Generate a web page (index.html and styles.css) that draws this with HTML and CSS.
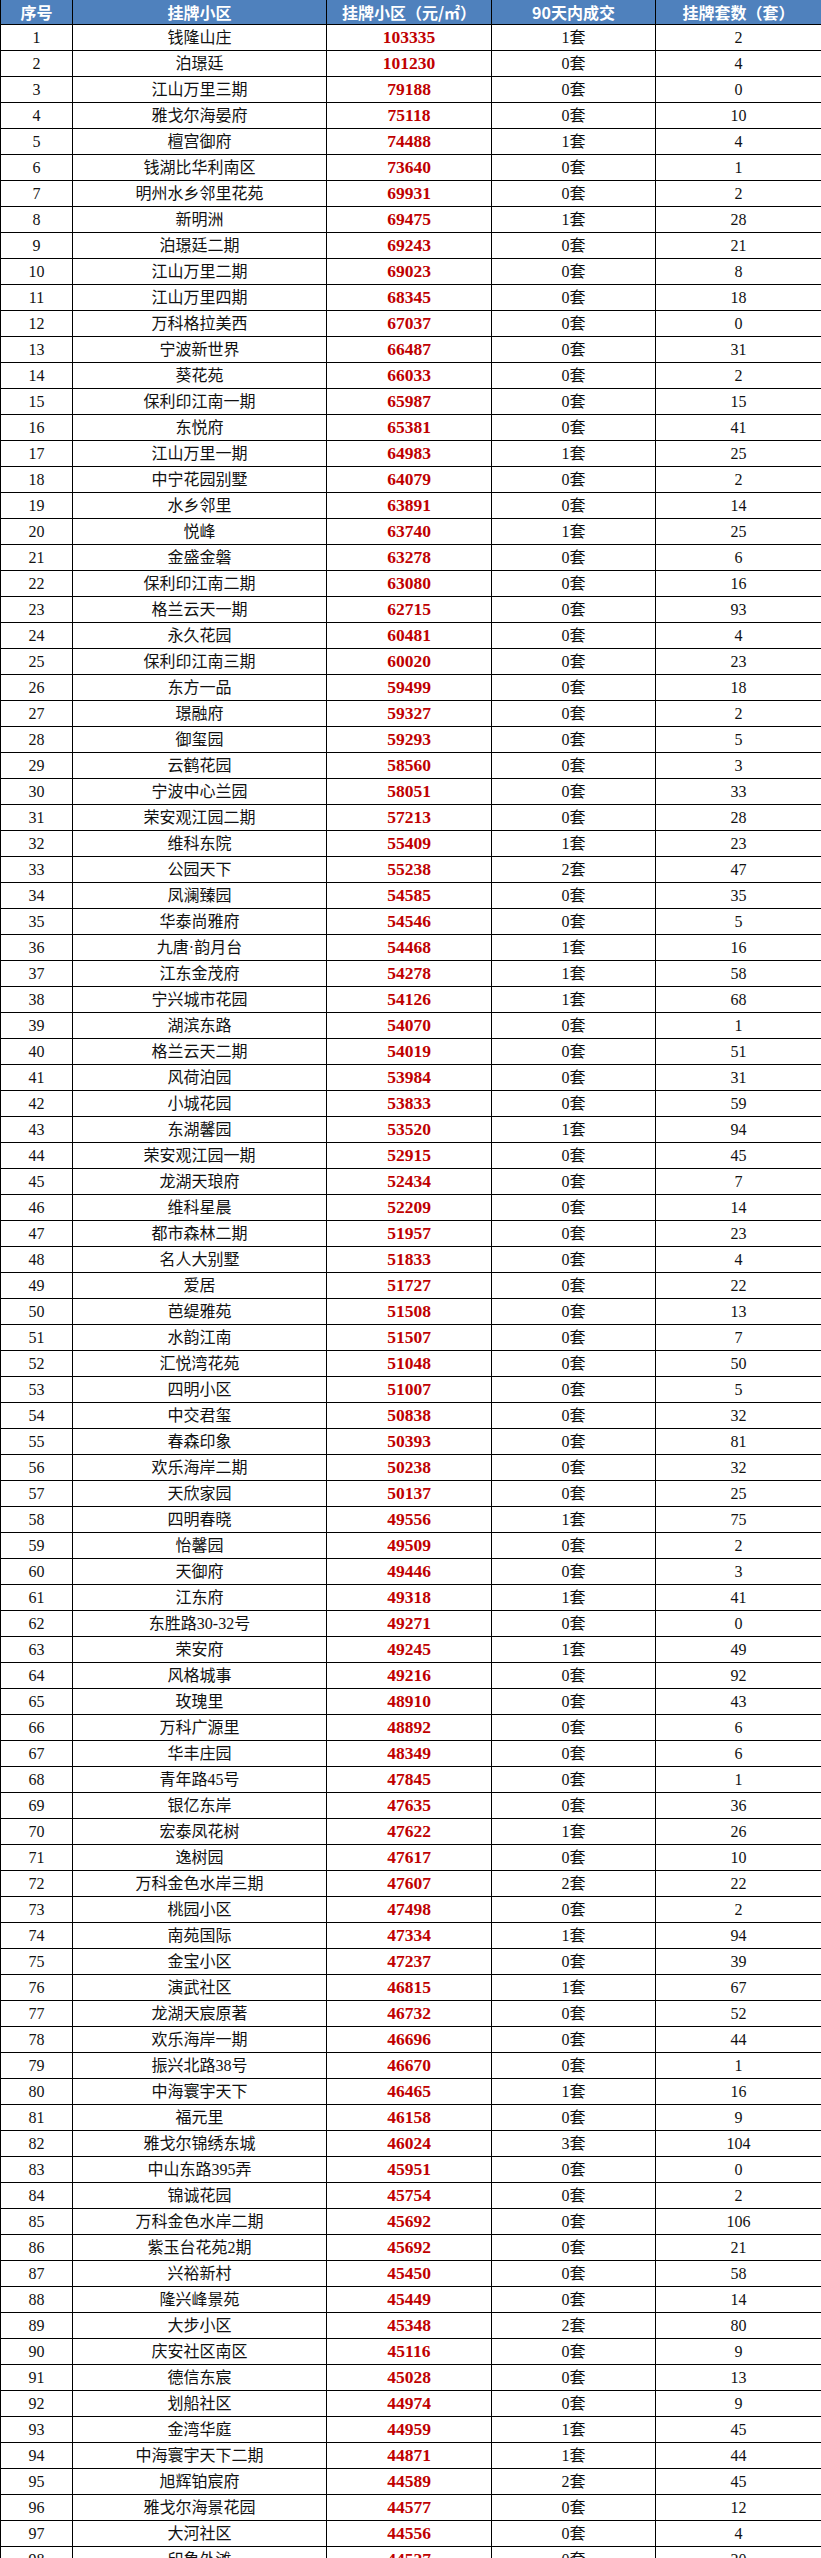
FILE: index.html
```html
<!DOCTYPE html>
<html lang="zh-CN">
<head>
<meta charset="utf-8">
<title>挂牌小区</title>
<link rel="stylesheet" href="styles.css">
</head>
<body>
<table class="tbl">
<colgroup><col class="c1"><col class="c2"><col class="c3"><col class="c4"><col class="c5"></colgroup>
<thead>
<tr><th>序号</th><th>挂牌小区</th><th>挂牌小区（元/㎡）</th><th>90天内成交</th><th>挂牌套数（套）</th></tr>
</thead>
<tbody>
<tr><td>1</td><td>钱隆山庄</td><td class="p">103335</td><td>1套</td><td>2</td></tr>
<tr><td>2</td><td>泊璟廷</td><td class="p">101230</td><td>0套</td><td>4</td></tr>
<tr><td>3</td><td>江山万里三期</td><td class="p">79188</td><td>0套</td><td>0</td></tr>
<tr><td>4</td><td>雅戈尔海晏府</td><td class="p">75118</td><td>0套</td><td>10</td></tr>
<tr><td>5</td><td>檀宫御府</td><td class="p">74488</td><td>1套</td><td>4</td></tr>
<tr><td>6</td><td>钱湖比华利南区</td><td class="p">73640</td><td>0套</td><td>1</td></tr>
<tr><td>7</td><td>明州水乡邻里花苑</td><td class="p">69931</td><td>0套</td><td>2</td></tr>
<tr><td>8</td><td>新明洲</td><td class="p">69475</td><td>1套</td><td>28</td></tr>
<tr><td>9</td><td>泊璟廷二期</td><td class="p">69243</td><td>0套</td><td>21</td></tr>
<tr><td>10</td><td>江山万里二期</td><td class="p">69023</td><td>0套</td><td>8</td></tr>
<tr><td>11</td><td>江山万里四期</td><td class="p">68345</td><td>0套</td><td>18</td></tr>
<tr><td>12</td><td>万科格拉美西</td><td class="p">67037</td><td>0套</td><td>0</td></tr>
<tr><td>13</td><td>宁波新世界</td><td class="p">66487</td><td>0套</td><td>31</td></tr>
<tr><td>14</td><td>葵花苑</td><td class="p">66033</td><td>0套</td><td>2</td></tr>
<tr><td>15</td><td>保利印江南一期</td><td class="p">65987</td><td>0套</td><td>15</td></tr>
<tr><td>16</td><td>东悦府</td><td class="p">65381</td><td>0套</td><td>41</td></tr>
<tr><td>17</td><td>江山万里一期</td><td class="p">64983</td><td>1套</td><td>25</td></tr>
<tr><td>18</td><td>中宁花园别墅</td><td class="p">64079</td><td>0套</td><td>2</td></tr>
<tr><td>19</td><td>水乡邻里</td><td class="p">63891</td><td>0套</td><td>14</td></tr>
<tr><td>20</td><td>悦峰</td><td class="p">63740</td><td>1套</td><td>25</td></tr>
<tr><td>21</td><td>金盛金磐</td><td class="p">63278</td><td>0套</td><td>6</td></tr>
<tr><td>22</td><td>保利印江南二期</td><td class="p">63080</td><td>0套</td><td>16</td></tr>
<tr><td>23</td><td>格兰云天一期</td><td class="p">62715</td><td>0套</td><td>93</td></tr>
<tr><td>24</td><td>永久花园</td><td class="p">60481</td><td>0套</td><td>4</td></tr>
<tr><td>25</td><td>保利印江南三期</td><td class="p">60020</td><td>0套</td><td>23</td></tr>
<tr><td>26</td><td>东方一品</td><td class="p">59499</td><td>0套</td><td>18</td></tr>
<tr><td>27</td><td>璟融府</td><td class="p">59327</td><td>0套</td><td>2</td></tr>
<tr><td>28</td><td>御玺园</td><td class="p">59293</td><td>0套</td><td>5</td></tr>
<tr><td>29</td><td>云鹤花园</td><td class="p">58560</td><td>0套</td><td>3</td></tr>
<tr><td>30</td><td>宁波中心兰园</td><td class="p">58051</td><td>0套</td><td>33</td></tr>
<tr><td>31</td><td>荣安观江园二期</td><td class="p">57213</td><td>0套</td><td>28</td></tr>
<tr><td>32</td><td>维科东院</td><td class="p">55409</td><td>1套</td><td>23</td></tr>
<tr><td>33</td><td>公园天下</td><td class="p">55238</td><td>2套</td><td>47</td></tr>
<tr><td>34</td><td>凤澜臻园</td><td class="p">54585</td><td>0套</td><td>35</td></tr>
<tr><td>35</td><td>华泰尚雅府</td><td class="p">54546</td><td>0套</td><td>5</td></tr>
<tr><td>36</td><td>九唐·韵月台</td><td class="p">54468</td><td>1套</td><td>16</td></tr>
<tr><td>37</td><td>江东金茂府</td><td class="p">54278</td><td>1套</td><td>58</td></tr>
<tr><td>38</td><td>宁兴城市花园</td><td class="p">54126</td><td>1套</td><td>68</td></tr>
<tr><td>39</td><td>湖滨东路</td><td class="p">54070</td><td>0套</td><td>1</td></tr>
<tr><td>40</td><td>格兰云天二期</td><td class="p">54019</td><td>0套</td><td>51</td></tr>
<tr><td>41</td><td>风荷泊园</td><td class="p">53984</td><td>0套</td><td>31</td></tr>
<tr><td>42</td><td>小城花园</td><td class="p">53833</td><td>0套</td><td>59</td></tr>
<tr><td>43</td><td>东湖馨园</td><td class="p">53520</td><td>1套</td><td>94</td></tr>
<tr><td>44</td><td>荣安观江园一期</td><td class="p">52915</td><td>0套</td><td>45</td></tr>
<tr><td>45</td><td>龙湖天琅府</td><td class="p">52434</td><td>0套</td><td>7</td></tr>
<tr><td>46</td><td>维科星晨</td><td class="p">52209</td><td>0套</td><td>14</td></tr>
<tr><td>47</td><td>都市森林二期</td><td class="p">51957</td><td>0套</td><td>23</td></tr>
<tr><td>48</td><td>名人大别墅</td><td class="p">51833</td><td>0套</td><td>4</td></tr>
<tr><td>49</td><td>爱居</td><td class="p">51727</td><td>0套</td><td>22</td></tr>
<tr><td>50</td><td>芭缇雅苑</td><td class="p">51508</td><td>0套</td><td>13</td></tr>
<tr><td>51</td><td>水韵江南</td><td class="p">51507</td><td>0套</td><td>7</td></tr>
<tr><td>52</td><td>汇悦湾花苑</td><td class="p">51048</td><td>0套</td><td>50</td></tr>
<tr><td>53</td><td>四明小区</td><td class="p">51007</td><td>0套</td><td>5</td></tr>
<tr><td>54</td><td>中交君玺</td><td class="p">50838</td><td>0套</td><td>32</td></tr>
<tr><td>55</td><td>春森印象</td><td class="p">50393</td><td>0套</td><td>81</td></tr>
<tr><td>56</td><td>欢乐海岸二期</td><td class="p">50238</td><td>0套</td><td>32</td></tr>
<tr><td>57</td><td>天欣家园</td><td class="p">50137</td><td>0套</td><td>25</td></tr>
<tr><td>58</td><td>四明春晓</td><td class="p">49556</td><td>1套</td><td>75</td></tr>
<tr><td>59</td><td>怡馨园</td><td class="p">49509</td><td>0套</td><td>2</td></tr>
<tr><td>60</td><td>天御府</td><td class="p">49446</td><td>0套</td><td>3</td></tr>
<tr><td>61</td><td>江东府</td><td class="p">49318</td><td>1套</td><td>41</td></tr>
<tr><td>62</td><td>东胜路30-32号</td><td class="p">49271</td><td>0套</td><td>0</td></tr>
<tr><td>63</td><td>荣安府</td><td class="p">49245</td><td>1套</td><td>49</td></tr>
<tr><td>64</td><td>风格城事</td><td class="p">49216</td><td>0套</td><td>92</td></tr>
<tr><td>65</td><td>玫瑰里</td><td class="p">48910</td><td>0套</td><td>43</td></tr>
<tr><td>66</td><td>万科广源里</td><td class="p">48892</td><td>0套</td><td>6</td></tr>
<tr><td>67</td><td>华丰庄园</td><td class="p">48349</td><td>0套</td><td>6</td></tr>
<tr><td>68</td><td>青年路45号</td><td class="p">47845</td><td>0套</td><td>1</td></tr>
<tr><td>69</td><td>银亿东岸</td><td class="p">47635</td><td>0套</td><td>36</td></tr>
<tr><td>70</td><td>宏泰凤花树</td><td class="p">47622</td><td>1套</td><td>26</td></tr>
<tr><td>71</td><td>逸树园</td><td class="p">47617</td><td>0套</td><td>10</td></tr>
<tr><td>72</td><td>万科金色水岸三期</td><td class="p">47607</td><td>2套</td><td>22</td></tr>
<tr><td>73</td><td>桃园小区</td><td class="p">47498</td><td>0套</td><td>2</td></tr>
<tr><td>74</td><td>南苑国际</td><td class="p">47334</td><td>1套</td><td>94</td></tr>
<tr><td>75</td><td>金宝小区</td><td class="p">47237</td><td>0套</td><td>39</td></tr>
<tr><td>76</td><td>演武社区</td><td class="p">46815</td><td>1套</td><td>67</td></tr>
<tr><td>77</td><td>龙湖天宸原著</td><td class="p">46732</td><td>0套</td><td>52</td></tr>
<tr><td>78</td><td>欢乐海岸一期</td><td class="p">46696</td><td>0套</td><td>44</td></tr>
<tr><td>79</td><td>振兴北路38号</td><td class="p">46670</td><td>0套</td><td>1</td></tr>
<tr><td>80</td><td>中海寰宇天下</td><td class="p">46465</td><td>1套</td><td>16</td></tr>
<tr><td>81</td><td>福元里</td><td class="p">46158</td><td>0套</td><td>9</td></tr>
<tr><td>82</td><td>雅戈尔锦绣东城</td><td class="p">46024</td><td>3套</td><td>104</td></tr>
<tr><td>83</td><td>中山东路395弄</td><td class="p">45951</td><td>0套</td><td>0</td></tr>
<tr><td>84</td><td>锦诚花园</td><td class="p">45754</td><td>0套</td><td>2</td></tr>
<tr><td>85</td><td>万科金色水岸二期</td><td class="p">45692</td><td>0套</td><td>106</td></tr>
<tr><td>86</td><td>紫玉台花苑2期</td><td class="p">45692</td><td>0套</td><td>21</td></tr>
<tr><td>87</td><td>兴裕新村</td><td class="p">45450</td><td>0套</td><td>58</td></tr>
<tr><td>88</td><td>隆兴峰景苑</td><td class="p">45449</td><td>0套</td><td>14</td></tr>
<tr><td>89</td><td>大步小区</td><td class="p">45348</td><td>2套</td><td>80</td></tr>
<tr><td>90</td><td>庆安社区南区</td><td class="p">45116</td><td>0套</td><td>9</td></tr>
<tr><td>91</td><td>德信东宸</td><td class="p">45028</td><td>0套</td><td>13</td></tr>
<tr><td>92</td><td>划船社区</td><td class="p">44974</td><td>0套</td><td>9</td></tr>
<tr><td>93</td><td>金湾华庭</td><td class="p">44959</td><td>1套</td><td>45</td></tr>
<tr><td>94</td><td>中海寰宇天下二期</td><td class="p">44871</td><td>1套</td><td>44</td></tr>
<tr><td>95</td><td>旭辉铂宸府</td><td class="p">44589</td><td>2套</td><td>45</td></tr>
<tr><td>96</td><td>雅戈尔海景花园</td><td class="p">44577</td><td>0套</td><td>12</td></tr>
<tr><td>97</td><td>大河社区</td><td class="p">44556</td><td>0套</td><td>4</td></tr>
<tr><td>98</td><td>印象外滩</td><td class="p">44527</td><td>0套</td><td>20</td></tr>
</tbody>
</table>
</body>
</html>
```
FILE: styles.css
```css
html, body {
  margin: 0;
  padding: 0;
  background: #ffffff;
}
.tbl {
  border-collapse: collapse;
  table-layout: fixed;
  width: 821px;
  font-family: "Liberation Serif", "Noto Sans CJK SC", serif;
  font-size: 16px;
  color: #111111;
}
.c1 { width: 72px; }
.c2 { width: 254px; }
.c3 { width: 165px; }
.c4 { width: 164px; }
.c5 { width: 166px; }
.tbl th {
  background: #4f81bd;
  color: #ffffff;
  font-family: "Noto Sans CJK SC", sans-serif;
  font-weight: 700;
  font-size: 16px;
  height: 24px;
  line-height: 22px;
  padding: 0;
  text-align: center;
  border: 1px solid #000000;
  border-top: 0;
  white-space: nowrap;
}
.tbl td {
  height: 25px;
  line-height: 25px;
  padding: 0;
  text-align: center;
  border: 1px solid #000000;
  white-space: nowrap;
}
.tbl td.p {
  color: #c00000;
  font-weight: 700;
  font-size: 17.5px;
}
```
